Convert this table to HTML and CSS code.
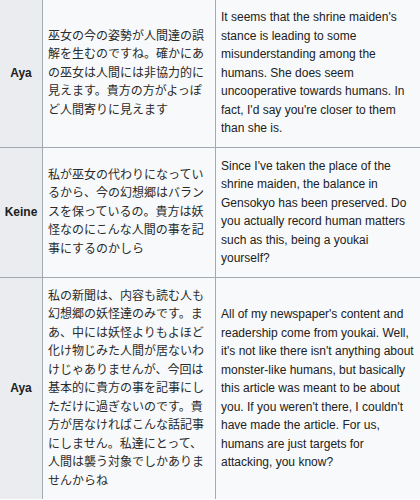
FILE: index.html
```html
<!DOCTYPE html>
<html lang="ja">
<head>
<meta charset="utf-8">
<link rel="stylesheet" href="styles.css">
</head>
<body>
<div class="dialogue">
  <div class="speaker">Aya</div>
  <div class="line jp">巫女の今の姿勢が人間達の誤解を生むのですね。確かにあの巫女は人間には非協力的に見えます。貴方の方がよっぽど人間寄りに見えます</div>
  <div class="line en">It seems that the shrine maiden's stance is leading to some misunderstanding among the humans. She does seem uncooperative towards humans. In fact, I'd say you're closer to them than she is.</div>

  <div class="speaker">Keine</div>
  <div class="line jp">私が巫女の代わりになっているから、今の幻想郷はバランスを保っているの。貴方は妖怪なのにこんな人間の事を記事にするのかしら</div>
  <div class="line en">Since I've taken the place of the shrine maiden, the balance in Gensokyo has been preserved. Do you actually record human matters such as this, being a youkai yourself?</div>

  <div class="speaker">Aya</div>
  <div class="line jp">私の新聞は、内容も読む人も幻想郷の妖怪達のみです。まあ、中には妖怪よりもよほど化け物じみた人間が居ないわけじゃありませんが、今回は基本的に貴方の事を記事にしただけに過ぎないのです。貴方が居なければこんな話記事にしません。私達にとって、人間は襲う対象でしかありませんからね</div>
  <div class="line en">All of my newspaper's content and readership come from youkai. Well, it's not like there isn't anything about monster-like humans, but basically this article was meant to be about you. If you weren't there, I couldn't have made the article. For us, humans are just targets for attacking, you know?</div>
</div>
</body>
</html>
```

FILE: styles.css
```css
html, body {
  margin: 0;
  padding: 0;
  background: #ffffff;
}

body {
  font-family: "Liberation Sans", Arial, "Noto Sans CJK JP", sans-serif;
  font-size: 12px;
  color: #202122;
}

.dialogue {
  display: grid;
  grid-template-columns: 42px 172px 1fr;
  gap: 1px;
  background: #a2a9b1;
  margin-top: -1px;
}

.speaker {
  background: #eaecf0;
  font-weight: bold;
  display: flex;
  align-items: center;
  justify-content: center;
  padding: 9px 2px;
  line-height: 18.5px;
}

.line {
  background: #f8f9fa;
  padding: 9px 5px;
  line-height: 18.5px;
  display: flex;
  align-items: center;
}

.jp {
  font-family: "Liberation Sans", "Noto Sans CJK JP", sans-serif;
  color: #2a2b2c;
}

.en {
  padding-right: 3px;
}
```
